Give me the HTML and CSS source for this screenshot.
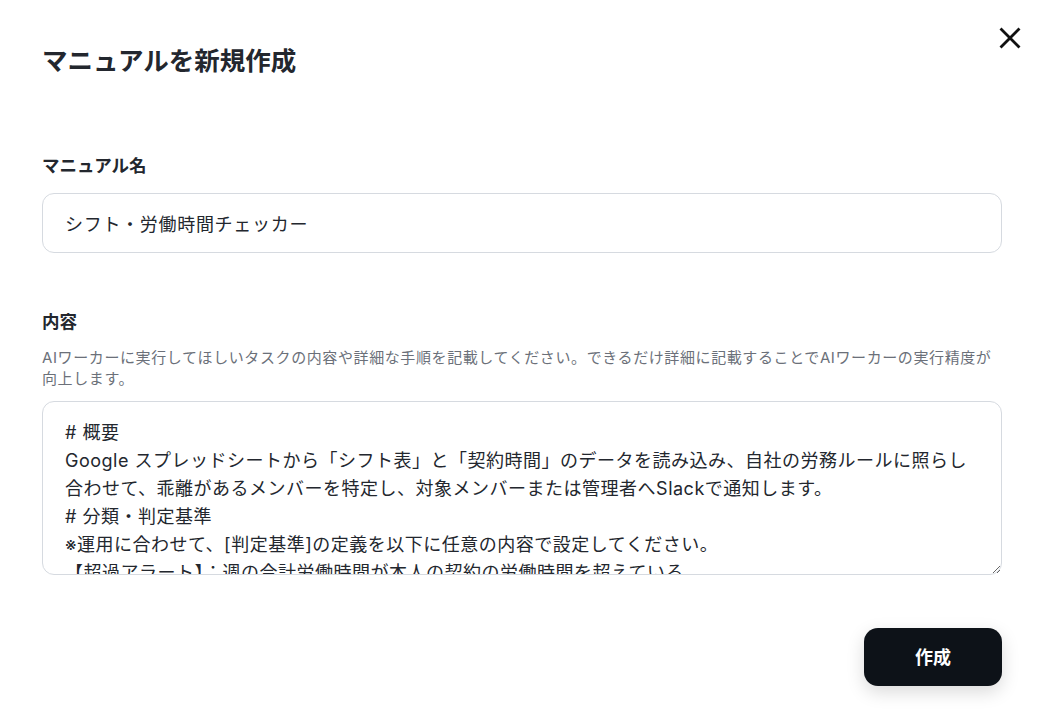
FILE: index.html
```html
<!DOCTYPE html>
<html lang="ja">
<head>
<meta charset="utf-8">
<link rel="stylesheet" href="styles.css">
</head>
<body>
<div class="modal">
  <button class="close" aria-label="閉じる">
    <svg width="22" height="22" viewBox="0 0 22 22"><path d="M2.5 2.5 L19.5 19.5 M19.5 2.5 L2.5 19.5" stroke="#111" stroke-width="2.8" stroke-linecap="square" fill="none"/></svg>
  </button>
  <h1 class="title">マニュアルを新規作成</h1>
  <div class="field field-name">
    <label class="label">マニュアル名</label>
    <input class="input" type="text" value="シフト・労働時間チェッカー">
  </div>
  <div class="field field-content">
    <label class="label">内容</label>
    <p class="desc">AIワーカーに実行してほしいタスクの内容や詳細な手順を記載してください。できるだけ詳細に記載することでAIワーカーの実行精度が向上します。</p>
    <textarea class="textarea"># 概要
Google スプレッドシートから「シフト表」と「契約時間」のデータを読み込み、自社の労務ルールに照らし合わせて、乖離があるメンバーを特定し、対象メンバーまたは管理者へSlackで通知します。
# 分類・判定基準
※運用に合わせて、[判定基準]の定義を以下に任意の内容で設定してください。
【超過アラート】：週の合計労働時間が本人の契約の労働時間を超えている
【不足アラート】：週の合計労働時間が本人の契約の労働時間に満たない</textarea>
  </div>
  <div class="actions">
    <button class="submit">作成</button>
  </div>
</div>
</body>
</html>
```
FILE: styles.css
```css
* { box-sizing: border-box; }
html, body { margin: 0; padding: 0; background: #fff; }
body {
  font-family: Inter, "Noto Sans CJK JP", sans-serif;
  color: #23272e;
  width: 1044px;
  height: 724px;
  overflow: hidden;
}
.modal {
  position: relative;
  padding: 43px 42px 0 42px;
  display: flex;
  flex-direction: column;
}
.close {
  position: absolute;
  top: 27px;
  right: 23px;
  width: 22px;
  height: 22px;
  padding: 0;
  border: 0;
  background: none;
  display: flex;
}
.title {
  margin: 0;
  font-size: 25.5px;
  line-height: 36px;
  font-weight: 700;
  color: #23272e;
}
.field { display: flex; flex-direction: column; }
.field-name { margin-top: 75px; }
.field-content { margin-top: 57px; }
.label {
  font-size: 17.5px;
  line-height: 24px;
  font-weight: 700;
  color: #23272e;
}
.input {
  margin-top: 15px;
  height: 60px;
  border: 1px solid #d6dae0;
  border-radius: 12px;
  padding: 0 22px;
  font-family: inherit;
  font-size: 18px;
  letter-spacing: 0.7px;
  color: #23272e;
  outline: none;
}
.desc {
  margin: 13px 0 0;
  font-size: 15px;
  letter-spacing: 0.6px;
  line-height: 21px;
  color: #6b7079;
}
.textarea {
  margin-top: 12px;
  height: 174px;
  border: 1px solid #d6dae0;
  border-radius: 12px;
  padding: 17px 30px 15px 22px;
  font-family: inherit;
  font-size: 18px;
  letter-spacing: 0.5px;
  line-height: 28px;
  color: #23272e;
  resize: vertical;
  outline: none;
  overflow: hidden;
}
.actions {
  margin-top: 53px;
  display: flex;
  justify-content: flex-end;
}
.submit {
  width: 138px;
  height: 58px;
  padding: 0 0 3px;
  border: 0;
  border-radius: 14px;
  background: #0d1218;
  color: #fff;
  font-family: inherit;
  font-size: 18px;
  font-weight: 700;
  box-shadow: 0 6px 18px rgba(0,0,0,0.15);
}
```
